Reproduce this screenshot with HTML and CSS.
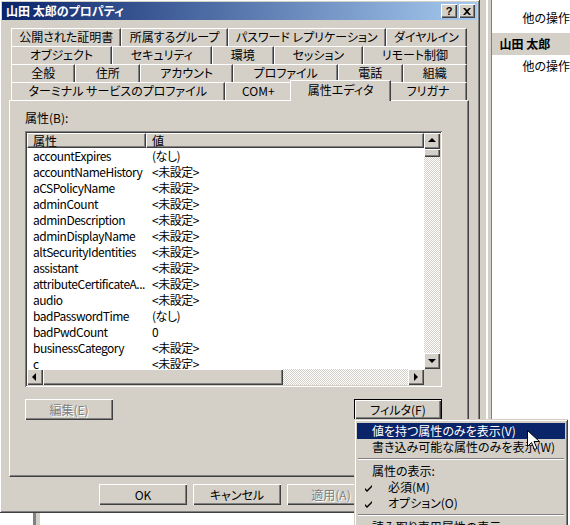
FILE: index.html
```html
<!DOCTYPE html>
<html lang="ja">
  <head>
    <meta charset="utf-8" />
    <title>山田 太郎のプロパティ</title>
    <link rel="stylesheet" href="styles.css">
  </head>

  <body>
    <div class="desktop">
      <!-- консоль за диалогом -->
      <div class="console">
        <div class="console__tree"></div>
        <div class="console__split"></div>
        <div class="console__main"></div>
        <div class="console__splitter"></div>
        <div class="console__actions">
          <div class="action">他の操作</div>
          <div class="action-group">山田 太郎</div>
          <div class="action">他の操作</div>
        </div>
      </div>

      <div class="dialog">
        <div class="titlebar">
          <span class="titlebar__text">山田 太郎のプロパティ</span>
          <span class="titlebar__btn titlebar__btn_help">?</span>
          <span class="titlebar__btn">
            <svg width="8" height="7" viewBox="0 0 8 7"><path d="M0 0h2l2 2 2-2h2l-3 3.5 3 3.5h-2l-2-2-2 2h-2l3-3.5z" fill="#000"/></svg>
          </span>
        </div>

        <div class="tabs">
          <div class="tabs__row">
            <div class="tab">公開された証明書</div>
            <div class="tab">所属するグループ</div>
            <div class="tab">パスワード レプリケーション</div>
            <div class="tab">ダイヤルイン</div>
          </div>
          <div class="tabs__row">
            <div class="tab">オブジェクト</div>
            <div class="tab">セキュリティ</div>
            <div class="tab">環境</div>
            <div class="tab">セッション</div>
            <div class="tab">リモート制御</div>
          </div>
          <div class="tabs__row">
            <div class="tab">全般</div>
            <div class="tab">住所</div>
            <div class="tab">アカウント</div>
            <div class="tab">プロファイル</div>
            <div class="tab">電話</div>
            <div class="tab">組織</div>
          </div>
          <div class="tabs__row">
            <div class="tab">ターミナル サービスのプロファイル</div>
            <div class="tab">COM+</div>
            <div class="tab tab_active">属性エディタ</div>
            <div class="tab">フリガナ</div>
          </div>
        </div>

        <div class="panel">
          <div class="panel__label">属性(B):</div>
          <div class="listview">
            <div class="listview__body">
              <div class="listview__head">
                <div class="listview__col listview__col_name">属性</div>
                <div class="listview__col">値</div>
              </div>
              <div class="listview__row"><span>accountExpires</span><span>(なし)</span></div>
              <div class="listview__row"><span>accountNameHistory</span><span>&lt;未設定&gt;</span></div>
              <div class="listview__row"><span>aCSPolicyName</span><span>&lt;未設定&gt;</span></div>
              <div class="listview__row"><span>adminCount</span><span>&lt;未設定&gt;</span></div>
              <div class="listview__row"><span>adminDescription</span><span>&lt;未設定&gt;</span></div>
              <div class="listview__row"><span>adminDisplayName</span><span>&lt;未設定&gt;</span></div>
              <div class="listview__row"><span>altSecurityIdentities</span><span>&lt;未設定&gt;</span></div>
              <div class="listview__row"><span>assistant</span><span>&lt;未設定&gt;</span></div>
              <div class="listview__row"><span>attributeCertificateA...</span><span>&lt;未設定&gt;</span></div>
              <div class="listview__row"><span>audio</span><span>&lt;未設定&gt;</span></div>
              <div class="listview__row"><span>badPasswordTime</span><span>(なし)</span></div>
              <div class="listview__row"><span>badPwdCount</span><span>0</span></div>
              <div class="listview__row"><span>businessCategory</span><span>&lt;未設定&gt;</span></div>
              <div class="listview__row"><span>c</span><span>&lt;未設定&gt;</span></div>
            </div>
            <div class="vscroll">
              <div class="sbtn sbtn_up"></div>
              <div class="vscroll__thumb"></div>
              <div class="vscroll__track"></div>
              <div class="sbtn sbtn_down"></div>
            </div>
            <div class="hscroll">
              <div class="sbtn sbtn_left"></div>
              <div class="hscroll__thumb"></div>
              <div class="hscroll__track"></div>
              <div class="sbtn sbtn_right"></div>
            </div>
            <div class="listview__corner"></div>
          </div>
          <div class="panel__buttons">
            <div class="btn btn_disabled">編集(E)</div>
            <div class="btn btn_default">フィルタ(F)</div>
          </div>
        </div>

        <div class="dialog__buttons">
          <div class="btn">OK</div>
          <div class="btn">キャンセル</div>
          <div class="btn btn_disabled">適用(A)</div>
        </div>
      </div>

      <!-- всплывающее меню кнопки "フィルタ" -->
      <div class="menu">
        <div class="menu__item menu__item_hover">値を持つ属性のみを表示(V)</div>
        <div class="menu__item">書き込み可能な属性のみを表示(W)</div>
        <div class="menu__sep"></div>
        <div class="menu__item">属性の表示:</div>
        <div class="menu__item menu__item_sub">
          <span class="menu__check"><svg width="7" height="7" viewBox="0 0 7 7"><path d="M0 3l2 2 5-5v2l-5 5-2-2z" fill="#000"/></svg></span>必須(M)
        </div>
        <div class="menu__item menu__item_sub">
          <span class="menu__check"><svg width="7" height="7" viewBox="0 0 7 7"><path d="M0 3l2 2 5-5v2l-5 5-2-2z" fill="#000"/></svg></span>オプション(O)
        </div>
        <div class="menu__sep"></div>
        <div class="menu__item">読み取り専用属性の表示</div>
      </div>

      <svg class="cursor" width="13" height="21" viewBox="0 0 13 21">
        <path d="M0.5 0.5v16l4-4 3 7 2.5-1-3-7h5.5z" fill="#fff" stroke="#000" stroke-width="1"/>
      </svg>
    </div>
  </body>
</html>
```

FILE: styles.css
```css
* {
  box-sizing: border-box;
}

body {
  margin: 0;
  background: #fff;
  font-family: "Noto Sans CJK JP", "Noto Sans", sans-serif;
  font-size: 12px;
  line-height: 16px;
  color: #000;
  font-feature-settings: "palt";
}

.desktop {
  position: relative;
  width: 570px;
  height: 525px;
  overflow: hidden;
}

/* консоль */
.console {
  display: flex;
  height: 100%;
}

.console__tree {
  width: 33px;
}

.console__split {
  width: 7px;
  border-left: 3px solid #808080;
  background: #d4d0c8;
}

.console__main {
  width: 440px;
}

.console__splitter {
  width: 15px;
  background: linear-gradient(to right, #d4d0c8 0 8px, #fff 8px 10px,
    #d4d0c8 10px 13px, #808080 13px 14px, #404040 14px);
}

.console__actions {
  flex: 1;
  padding-top: 7px;
  white-space: nowrap;
}

.action {
  height: 21px;
  line-height: 21px;
  padding-left: 30px;
}

.action-group {
  height: 22px;
  line-height: 22px;
  margin-top: 5px;
  padding-left: 7px;
  font-weight: bold;
  background: #d4d0c8;
}

/* диалог */
.dialog {
  position: absolute;
  left: -1px;
  top: -1px;
  width: 481px;
  height: 514px;
  padding: 3px;
  background: #d4d0c8;
  box-shadow: inset 1px 1px #d4d0c8, inset -1px -1px #404040,
    inset 2px 2px #fff, inset -2px -2px #808080;
}

.titlebar {
  display: flex;
  align-items: center;
  height: 18px;
  padding: 0 2px;
  background: linear-gradient(to right, #0a246a, #a6caf0);
}

.titlebar__text {
  flex: 1;
  padding-left: 2px;
  color: #fff;
  font-weight: bold;
}

.titlebar__btn {
  display: flex;
  align-items: center;
  justify-content: center;
  width: 16px;
  height: 14px;
  background: #d4d0c8;
  font-weight: bold;
  font-size: 11px;
  font-family: "Liberation Sans", sans-serif;
  box-shadow: inset 1px 1px #fff, inset -1px -1px #404040,
    inset -2px -2px #808080;
}

.titlebar__btn_help {
  margin-right: 2px;
}

/* вкладки */
.tabs {
  margin: 8px 0 0 9px;
  width: 456px;
}

.tabs__row {
  display: flex;
  height: 18px;
}

.tab {
  flex: 1 1 auto;
  height: 18px;
  line-height: 16px;
  text-align: center;
  white-space: nowrap;
  background: #d4d0c8;
  border-top: 1px solid #fff;
  border-left: 1px solid #fff;
  border-right: 1px solid #404040;
  box-shadow: inset -1px 0 #808080;
}

.tab_active {
  position: relative;
  z-index: 1;
  height: 21px;
  margin: -2px -2px 0;
  line-height: 18px;
}

.panel {
  margin-left: 7px;
  width: 460px;
  height: 377px;
  padding: 9px 0 0 15px;
  border: 1px solid #fff;
  border-right-color: #404040;
  border-bottom-color: #404040;
  box-shadow: inset -1px -1px #808080;
}

.panel__label {
  margin-bottom: 5px;
}

/* список атрибутов */
.listview {
  display: grid;
  grid-template-columns: 1fr 16px;
  grid-template-rows: 1fr 16px;
  width: 417px;
  height: 256px;
  padding: 2px;
  background: #fff;
  box-shadow: inset 1px 1px #808080, inset -1px -1px #fff,
    inset 2px 2px #404040, inset -2px -2px #d4d0c8;
}

.listview__body {
  overflow: hidden;
  letter-spacing: -0.5px;
}

.listview__head {
  display: flex;
  height: 15px;
  letter-spacing: 0;
}

.listview__col {
  flex: 1;
  height: 15px;
  line-height: 13px;
  padding-left: 5px;
  overflow: hidden;
  background: #d4d0c8;
  border-top: 1px solid #fff;
  border-left: 1px solid #fff;
  border-right: 1px solid #404040;
  border-bottom: 1px solid #404040;
  box-shadow: inset -1px -1px #808080;
}

.listview__col_name {
  flex: 0 0 119px;
}

.listview__row {
  display: grid;
  grid-template-columns: 119px 1fr;
  height: 16px;
  line-height: 15px;
}

.listview__row span {
  padding-left: 6px;
  overflow: hidden;
  white-space: nowrap;
}

.listview__corner {
  background: #d4d0c8;
}

/* полосы прокрутки */
.vscroll {
  display: flex;
  flex-direction: column;
}

.hscroll {
  display: flex;
}

.vscroll__track,
.hscroll__track {
  flex: 1;
  background-image: conic-gradient(#fff 25%, #d4d0c8 0 50%, #fff 0 75%, #d4d0c8 0);
  background-size: 2px 2px;
}

.sbtn,
.vscroll__thumb,
.hscroll__thumb {
  position: relative;
  flex: 0 0 16px;
  width: 16px;
  height: 16px;
  background: #d4d0c8;
  box-shadow: inset 1px 1px #fff, inset -1px -1px #404040,
    inset -2px -2px #808080;
}

.vscroll__thumb {
  flex-basis: 8px;
  height: 8px;
}

.hscroll__thumb {
  flex-basis: 240px;
  width: 240px;
}

.sbtn::before {
  content: "";
  position: absolute;
  left: 50%;
  top: 50%;
  border: 4px solid transparent;
}

.sbtn_up::before {
  border-bottom-color: #000;
  border-top-width: 0;
  margin: -3px 0 0 -4px;
}

.sbtn_down::before {
  border-top-color: #000;
  border-bottom-width: 0;
  margin: -2px 0 0 -4px;
}

.sbtn_left::before {
  border-right-color: #000;
  border-left-width: 0;
  margin: -4px 0 0 -3px;
}

.sbtn_right::before {
  border-left-color: #000;
  border-right-width: 0;
  margin: -4px 0 0 -2px;
}

/* кнопки */
.btn {
  width: 88px;
  height: 21px;
  line-height: 21px;
  text-align: center;
  background: #d4d0c8;
  box-shadow: inset 1px 1px #fff, inset -1px -1px #404040,
    inset -2px -2px #808080;
}

.btn_disabled {
  color: #808080;
  text-shadow: 1px 1px #fff;
}

.btn_default {
  border: 1px solid #000;
  line-height: 19px;
}

.panel__buttons {
  display: flex;
  justify-content: space-between;
  width: 417px;
  margin-top: 12px;
}

.dialog__buttons {
  display: flex;
  gap: 6px;
  margin-top: 7px;
  padding-left: 97px;
}

/* меню */
.menu {
  position: absolute;
  left: 354px;
  top: 419px;
  width: 214px;
  padding: 4px 3px;
  white-space: nowrap;
  background: #d4d0c8;
  box-shadow: inset 1px 1px #d4d0c8, inset -1px -1px #404040,
    inset 2px 2px #fff, inset -2px -2px #808080;
}

.menu__item {
  height: 16px;
  line-height: 16px;
  padding-left: 15px;
}

.menu__item_hover {
  color: #fff;
  background: #0a246a;
}

.menu__item_sub {
  padding-left: 6px;
}

.menu__check {
  display: inline-block;
  width: 25px;
  padding-left: 2px;
}

.menu__sep {
  height: 8px;
  padding-top: 3px;
}

.menu__sep::before {
  content: "";
  display: block;
  margin: 0 1px;
  border-top: 1px solid #808080;
  border-bottom: 1px solid #fff;
}

.cursor {
  position: absolute;
  left: 527px;
  top: 430px;
}
```
